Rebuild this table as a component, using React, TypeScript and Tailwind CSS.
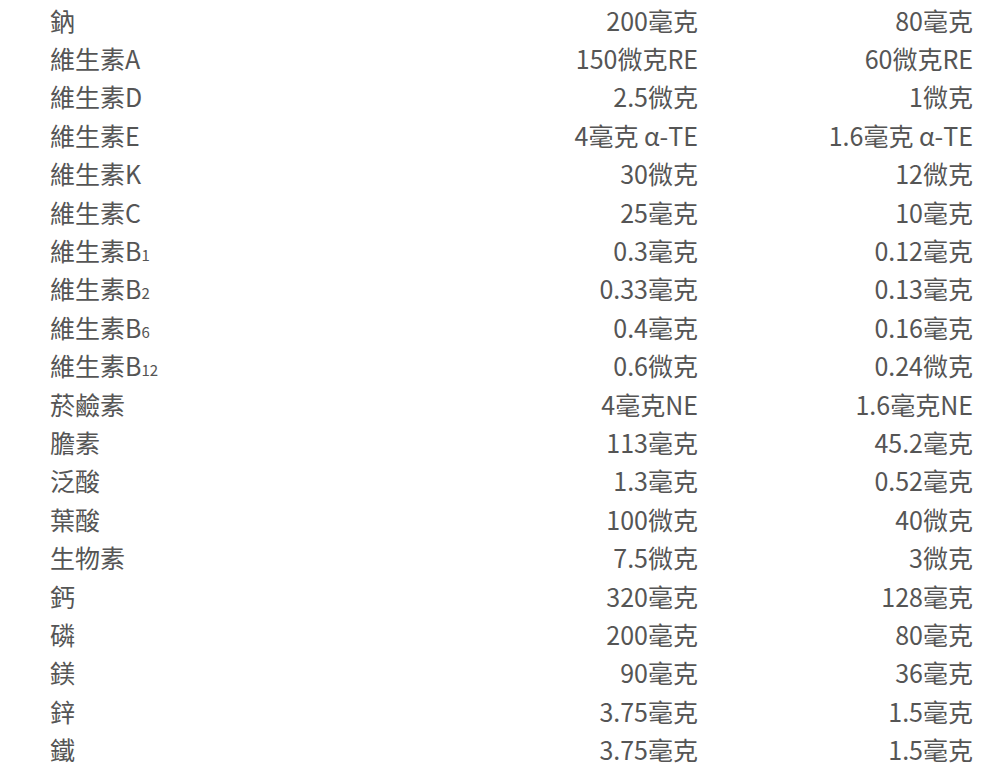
const rows: { name: string; sub?: string; a: string; b: string }[] = [
  { name: "鈉", a: "200毫克", b: "80毫克" },
  { name: "維生素A", a: "150微克RE", b: "60微克RE" },
  { name: "維生素D", a: "2.5微克", b: "1微克" },
  { name: "維生素E", a: "4毫克 α-TE", b: "1.6毫克 α-TE" },
  { name: "維生素K", a: "30微克", b: "12微克" },
  { name: "維生素C", a: "25毫克", b: "10毫克" },
  { name: "維生素B", sub: "1", a: "0.3毫克", b: "0.12毫克" },
  { name: "維生素B", sub: "2", a: "0.33毫克", b: "0.13毫克" },
  { name: "維生素B", sub: "6", a: "0.4毫克", b: "0.16毫克" },
  { name: "維生素B", sub: "12", a: "0.6微克", b: "0.24微克" },
  { name: "菸鹼素", a: "4毫克NE", b: "1.6毫克NE" },
  { name: "膽素", a: "113毫克", b: "45.2毫克" },
  { name: "泛酸", a: "1.3毫克", b: "0.52毫克" },
  { name: "葉酸", a: "100微克", b: "40微克" },
  { name: "生物素", a: "7.5微克", b: "3微克" },
  { name: "鈣", a: "320毫克", b: "128毫克" },
  { name: "磷", a: "200毫克", b: "80毫克" },
  { name: "鎂", a: "90毫克", b: "36毫克" },
  { name: "鋅", a: "3.75毫克", b: "1.5毫克" },
  { name: "鐵", a: "3.75毫克", b: "1.5毫克" },
];

export default function App() {
  return (
    <div
      className="w-[1000px] h-[770px] overflow-hidden bg-white pt-px pl-[50px] pr-[27px] text-[25px] text-[#555]"
      style={{ fontFamily: '"Noto Sans CJK TC", "Noto Sans", sans-serif' }}
    >
      {rows.map((r, i) => (
        <div key={i} className="grid grid-cols-[1fr_275px_275px] h-[38.4px] items-center leading-none">
          <div>
            {r.name}
            {r.sub && <span className="text-[15px]">{r.sub}</span>}
          </div>
          <div className="text-right">{r.a}</div>
          <div className="text-right">{r.b}</div>
        </div>
      ))}
    </div>
  );
}
